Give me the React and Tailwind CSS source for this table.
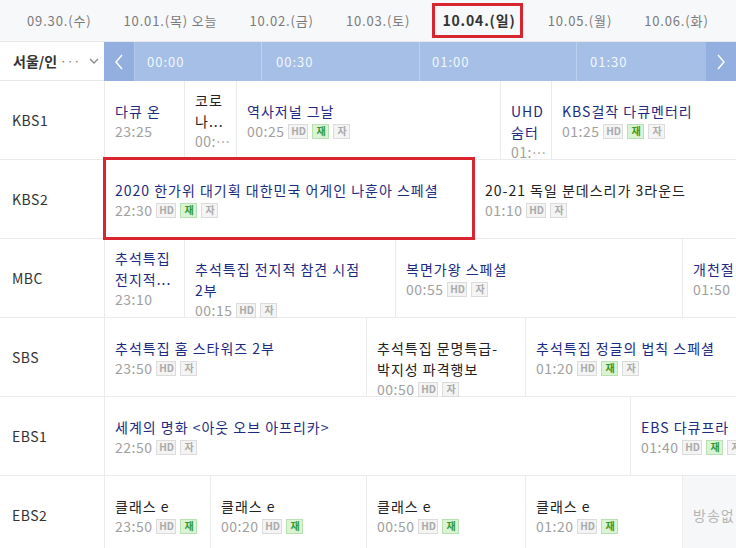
import React from 'react'

const dates = [
  { label: '09.30.(수)' },
  { label: '10.01.(목) 오늘' },
  { label: '10.02.(금)' },
  { label: '10.03.(토)' },
  { label: '10.04.(일)', active: true },
  { label: '10.05.(월)' },
  { label: '10.06.(화)' },
]

const HJJ = ['HD', '재', '자']
const HJ = ['HD', '자']
const HR = ['HD', '재']

const rows = [
  {
    ch: 'KBS1',
    cells: [
      { w: 'w-[80px]', title: ['다큐 온'], time: '23:25', link: true },
      { w: 'w-[52px]', title: ['코로', '나...'], time: '00:…', center: true },
      { w: 'w-[264px]', title: ['역사저널 그날'], time: '00:25', tags: HJJ, link: true },
      { w: 'w-[51px]', title: ['UHD', '숨터'], time: '01:…', link: true },
      { w: 'w-[185px]', title: ['KBS걸작 다큐멘터리'], time: '01:25', tags: HJJ, link: true },
    ],
  },
  {
    ch: 'KBS2',
    cells: [
      { w: 'w-[370px]', title: ['2020 한가위 대기획 대한민국 어게인 나훈아 스페셜'], time: '22:30', tags: HJJ, link: true, mark: true },
      { w: 'w-[262px]', title: ['20-21 독일 분데스리가 3라운드'], time: '01:10', tags: HJ },
    ],
  },
  {
    ch: 'MBC',
    cells: [
      { w: 'w-[80px]', title: ['추석특집', '전지적...'], time: '23:10', link: true, center: true },
      { w: 'w-[211px]', title: ['추석특집 전지적 참견 시점', '2부'], time: '00:15', tags: HJ, link: true },
      { w: 'w-[287px]', title: ['복면가왕 스페셜'], time: '00:55', tags: HJ, link: true },
      { w: 'w-[54px]', title: ['개천절'], time: '01:50', link: true },
    ],
  },
  {
    ch: 'SBS',
    cells: [
      { w: 'w-[262px]', title: ['추석특집 홈 스타워즈 2부'], time: '23:50', tags: HJ, link: true },
      { w: 'w-[159px]', title: ['추석특집 문명특급-', '박지성 파격행보'], time: '00:50', tags: HJ },
      { w: 'w-[211px]', title: ['추석특집 정글의 법칙 스페셜'], time: '01:20', tags: HJJ, link: true },
    ],
  },
  {
    ch: 'EBS1',
    cells: [
      { w: 'w-[526px]', title: ['세계의 명화 <아웃 오브 아프리카>'], time: '22:50', tags: HJ, link: true },
      { w: 'w-[106px]', title: ['EBS 다큐프라'], time: '01:40', tags: HJJ, link: true },
    ],
  },
  {
    ch: 'EBS2',
    cells: [
      { w: 'w-[106px]', title: ['클래스 e'], time: '23:50', tags: HR },
      { w: 'w-[156px]', title: ['클래스 e'], time: '00:20', tags: HR },
      { w: 'w-[159px]', title: ['클래스 e'], time: '00:50', tags: HR },
      { w: 'w-[157px]', title: ['클래스 e'], time: '01:20', tags: HR },
      { w: 'w-[54px]', empty: true },
    ],
  },
]

function Tag({ t }) {
  if (t === '재') {
    return (
      <span className="w-[17px] h-[15px] shrink-0 flex items-center justify-center border border-[#b9e0b1] bg-[#daf3d5] text-[10px] font-bold leading-none tracking-normal text-[#2f9a2b]">
        재
      </span>
    )
  }
  return (
    <span className={`${t === 'HD' ? 'w-[20px]' : 'w-[17px]'} h-[15px] shrink-0 flex items-center justify-center border border-[#dcdcdc] bg-[#f4f4f4] text-[10px] font-bold leading-none tracking-normal text-[#aaa]`}>
      {t}
    </span>
  )
}

function Cell({ c }) {
  if (c.empty) {
    return (
      <div className={`${c.w} shrink-0 h-full border-l border-[#ebebeb] bg-[#f6f7f9] pl-[10px] flex items-center whitespace-nowrap text-[14px] tracking-[1px] text-[#b5b5b5]`}>
        방송없
      </div>
    )
  }
  return (
    <div className={`${c.w} shrink-0 h-full border-l border-[#ebebeb] pl-[10px] flex flex-col ${c.center ? 'justify-center' : 'pt-[20px]'} ${c.mark ? 'relative' : ''}`}>
      {c.title.map((line, i) => (
        <div key={i} className={`text-[14px] leading-[21px] tracking-[1px] whitespace-nowrap ${c.link ? 'text-[#1c2b82]' : 'text-[#222]'}`}>
          {line}
        </div>
      ))}
      <div className="flex items-center gap-[4px] h-[18px] text-[14px] tracking-[0.5px] text-[#a0a0a0] whitespace-nowrap">
        <span>{c.time}</span>
        {c.tags && c.tags.map((t) => <Tag key={t} t={t} />)}
      </div>
      {c.mark && (
        <span className="absolute -left-[2px] -top-[3px] -right-[1px] -bottom-[2px] border-[3px] border-[#d9252d] pointer-events-none z-10"></span>
      )}
    </div>
  )
}

function Chevron({ dir }) {
  return (
    <svg width="10" height="16" viewBox="0 0 10 16" fill="none">
      <polyline
        points={dir === 'left' ? '8,1 2,8 8,15' : '2,1 8,8 2,15'}
        stroke="#ffffff"
        strokeWidth="1.4"
        strokeLinejoin="miter"
      />
    </svg>
  )
}

export default function App() {
  return (
    <div className="w-[736px] h-[548px] overflow-hidden bg-white font-['Noto_Sans_CJK_KR',sans-serif] text-[#333]">
      {/* date tabs */}
      <div className="h-[42px] bg-[#f7f8fa] border-b border-[#e6e8ec] flex items-stretch gap-[32px] pl-[27px]">
        {dates.map((d) => (
          <div key={d.label} className="relative flex items-center whitespace-nowrap">
            <span className={d.active ? 'text-[14px] font-bold text-[#333] tracking-[0.85px]' : 'text-[13px] text-[#7a7a7a] tracking-[0.85px]'}>
              {d.label}
            </span>
            {d.active && (
              <span className="absolute -left-[10px] -right-[7px] top-[3px] bottom-[3px] border-[3px] border-[#d9252d]"></span>
            )}
          </div>
        ))}
      </div>

      {/* time header */}
      <div className="h-[39px] flex">
        <div className="w-[104px] shrink-0 border-b border-[#e6e6e6] flex items-center pl-[13px] whitespace-nowrap">
          <span className="text-[14px] font-bold text-[#333]">서울/인</span>
          <span className="ml-[3px] text-[12px] text-[#777]">···</span>
          <svg className="ml-[9px]" width="10" height="7" viewBox="0 0 10 7" fill="none">
            <polyline points="1,1 5,5 9,1" stroke="#8a8a8a" strokeWidth="1.4" />
          </svg>
        </div>
        <div className="flex-1 flex bg-[#a5bfe7] text-[13px] tracking-[1px] text-[#f3f7fd]">
          <div className="w-[30px] shrink-0 bg-[#93afe0] flex items-center justify-center">
            <Chevron dir="left" />
          </div>
          <div className="w-[127px] shrink-0 border-l border-[#b3c9ec] flex items-center pl-[12px]">00:00</div>
          <div className="w-[158px] shrink-0 border-l border-[#bcd0ef] flex items-center pl-[14px]">00:30</div>
          <div className="w-[157px] shrink-0 border-l border-[#bcd0ef] flex items-center pl-[12px]">01:00</div>
          <div className="w-[130px] shrink-0 border-l border-[#bcd0ef] flex items-center pl-[13px]">01:30</div>
          <div className="w-[30px] shrink-0 bg-[#93afe0] flex items-center justify-center">
            <Chevron dir="right" />
          </div>
        </div>
      </div>

      {/* channel rows */}
      {rows.map((r) => (
        <div key={r.ch} className="h-[79px] flex border-b border-[#ebebeb]">
          <div className="w-[104px] shrink-0 flex items-center pl-[12px] text-[14px] tracking-[0.5px] text-[#333]">
            {r.ch}
          </div>
          {r.cells.map((c, i) => (
            <Cell key={i} c={c} />
          ))}
        </div>
      ))}
    </div>
  )
}
